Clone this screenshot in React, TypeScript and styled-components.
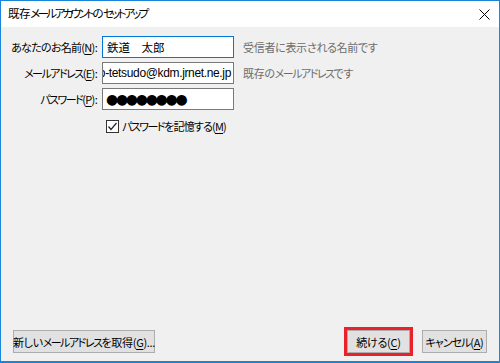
import React from 'react';
import styled, { createGlobalStyle } from 'styled-components';

const GlobalStyle = createGlobalStyle`
  html, body {
    margin: 0;
    padding: 0;
    background: #ffffff;
  }
  body {
    font-family: "Noto Sans CJK JP", "Noto Sans", sans-serif;
    font-size: 11px;
    font-feature-settings: "palt" 1;
    color: #000;
  }
`;

const Window = styled.div`
  box-sizing: border-box;
  width: 500px;
  height: 363px;
  border: 1px solid #1a84d8;
  border-bottom-width: 2px;
  display: flex;
  flex-direction: column;
  background: #f0f0f0;
`;

const TitleBar = styled.div`
  height: 26px;
  background: #ffffff;
  display: flex;
  align-items: center;
  justify-content: space-between;
  padding: 0 8px 0 7px;
`;

const Title = styled.span`
  font-size: 11.5px;
  line-height: 1;
  margin-top: -1px;
  letter-spacing: -0.4px;
`;

// katakana runs are set tighter than kanji, as in the Windows UI font
const Kana = styled.span<{ $ls?: number }>`
  letter-spacing: ${(p) => p.$ls ?? -1.5}px;
`;

const Close = styled.svg`
  width: 11px;
  height: 11px;
  margin-right: 1px;
`;

const Body = styled.div`
  flex: 1;
  display: flex;
  flex-direction: column;
  padding: 9px 12px 8px 0;
`;

const Form = styled.div`
  display: grid;
  grid-template-columns: 96px 132px auto;
  grid-auto-rows: 22px;
  column-gap: 5px;
  row-gap: 4px;
  align-items: center;
`;

const Label = styled.label`
  text-align: right;
  white-space: nowrap;
  letter-spacing: -0.7px;
  color: #000;
`;

const Key = styled.span`
  text-decoration: underline;
  text-underline-offset: 2px;
`;

const Field = styled.div<{ $focused?: boolean; $end?: boolean }>`
  box-sizing: border-box;
  height: 22px;
  background: #fff;
  border: 1px solid ${(p) => (p.$focused ? '#0078d7' : '#7a7a7a')};
  display: flex;
  align-items: center;
  justify-content: ${(p) => (p.$end ? 'flex-end' : 'flex-start')};
  overflow: hidden;
  padding: 0 2px 0 4px;
  white-space: nowrap;
  font-size: 11.5px;
`;

const Latin = styled.span`
  font-family: "Liberation Sans", "Noto Sans", sans-serif;
  font-size: 12px;
  letter-spacing: -0.35px;
`;

const Dots = styled.span`
  font-family: "DejaVu Sans", sans-serif;
  font-size: 14px;
  letter-spacing: -2.3px;
  margin-left: -1px;
`;

const Hint = styled.span`
  color: #6d6d6d;
  margin-left: 4px;
  white-space: nowrap;
  letter-spacing: -0.3px;
`;

const CheckRow = styled.label`
  grid-column: 2 / 4;
  display: flex;
  align-items: center;
  gap: 3px;
  margin-left: 4px;
  margin-top: 2px;
  white-space: nowrap;
  letter-spacing: -0.8px;
`;

const Box = styled.span`
  box-sizing: border-box;
  width: 13px;
  height: 13px;
  border: 1px solid #333;
  background: #fff;
  display: flex;
  align-items: center;
  justify-content: center;
`;

const Footer = styled.div`
  margin-top: auto;
  display: flex;
  align-items: center;
  padding-left: 12px;
`;

const Button = styled.button<{ $w: number; $marked?: boolean }>`
  box-sizing: border-box;
  height: 23px;
  width: ${(p) => p.$w}px;
  padding: 0;
  background: #e1e1e1;
  border: 1px solid #adadad;
  font-family: "Noto Sans CJK JP", sans-serif;
  font-feature-settings: "palt" 1;
  font-size: 11px;
  letter-spacing: -0.3px;
  color: #000;
  display: flex;
  align-items: center;
  justify-content: center;
  white-space: nowrap;
  outline: ${(p) => (p.$marked ? '3px solid #e8212b' : 'none')};
  outline-offset: 0;
`;

const Spacer = styled.div`
  flex: 1;
`;

const Gap = styled.div`
  width: 12px;
`;

export default function App() {
  return (
    <>
      <GlobalStyle />
      <Window>
        <TitleBar>
          <Title>
            既存<Kana $ls={-2.6}>メールアカウント</Kana>の<Kana $ls={-2.6}>セットアップ</Kana>
          </Title>
          <Close viewBox="0 0 11 11">
            <path d="M0.5 0.5 L10.5 10.5 M10.5 0.5 L0.5 10.5" stroke="#000" strokeWidth="1" fill="none" />
          </Close>
        </TitleBar>
        <Body>
          <Form>
            <Label>
              あなたのお名前(<Key>N</Key>):
            </Label>
            <Field $focused>鉄道　太郎</Field>
            <Hint>受信者に表示される名前です</Hint>

            <Label>
              <Kana>メールアドレス</Kana>(<Key>E</Key>):
            </Label>
            <Field $end>
              <Latin>so-tetsudo@kdm.jrnet.ne.jp</Latin>
            </Field>
            <Hint>
              既存の<Kana>メールアドレス</Kana>です
            </Hint>

            <Label>
              <Kana>パスワード</Kana>(<Key>P</Key>):
            </Label>
            <Field>
              <Dots>●●●●●●●●</Dots>
            </Field>
            <span />

            <CheckRow>
              <Box>
                <svg width="11" height="11" viewBox="0 0 11 11">
                  <path d="M1.5 5.5 L4 8.5 L9.5 2" stroke="#222" strokeWidth="1.2" fill="none" />
                </svg>
              </Box>
              <span>
                <Kana>パスワード</Kana>を記憶する(<Key>M</Key>)
              </span>
            </CheckRow>
          </Form>
          <Footer>
            <Button $w={142}>
              新しい<Kana>メールアドレス</Kana>を取得(<Key>G</Key>)...
            </Button>
            <Spacer />
            <Button $w={63} $marked>
              続ける(<Key>C</Key>)
            </Button>
            <Gap />
            <Button $w={65}>
              <Kana $ls={-1}>キャンセル</Kana>(<Key>A</Key>)
            </Button>
          </Footer>
        </Body>
      </Window>
    </>
  );
}
